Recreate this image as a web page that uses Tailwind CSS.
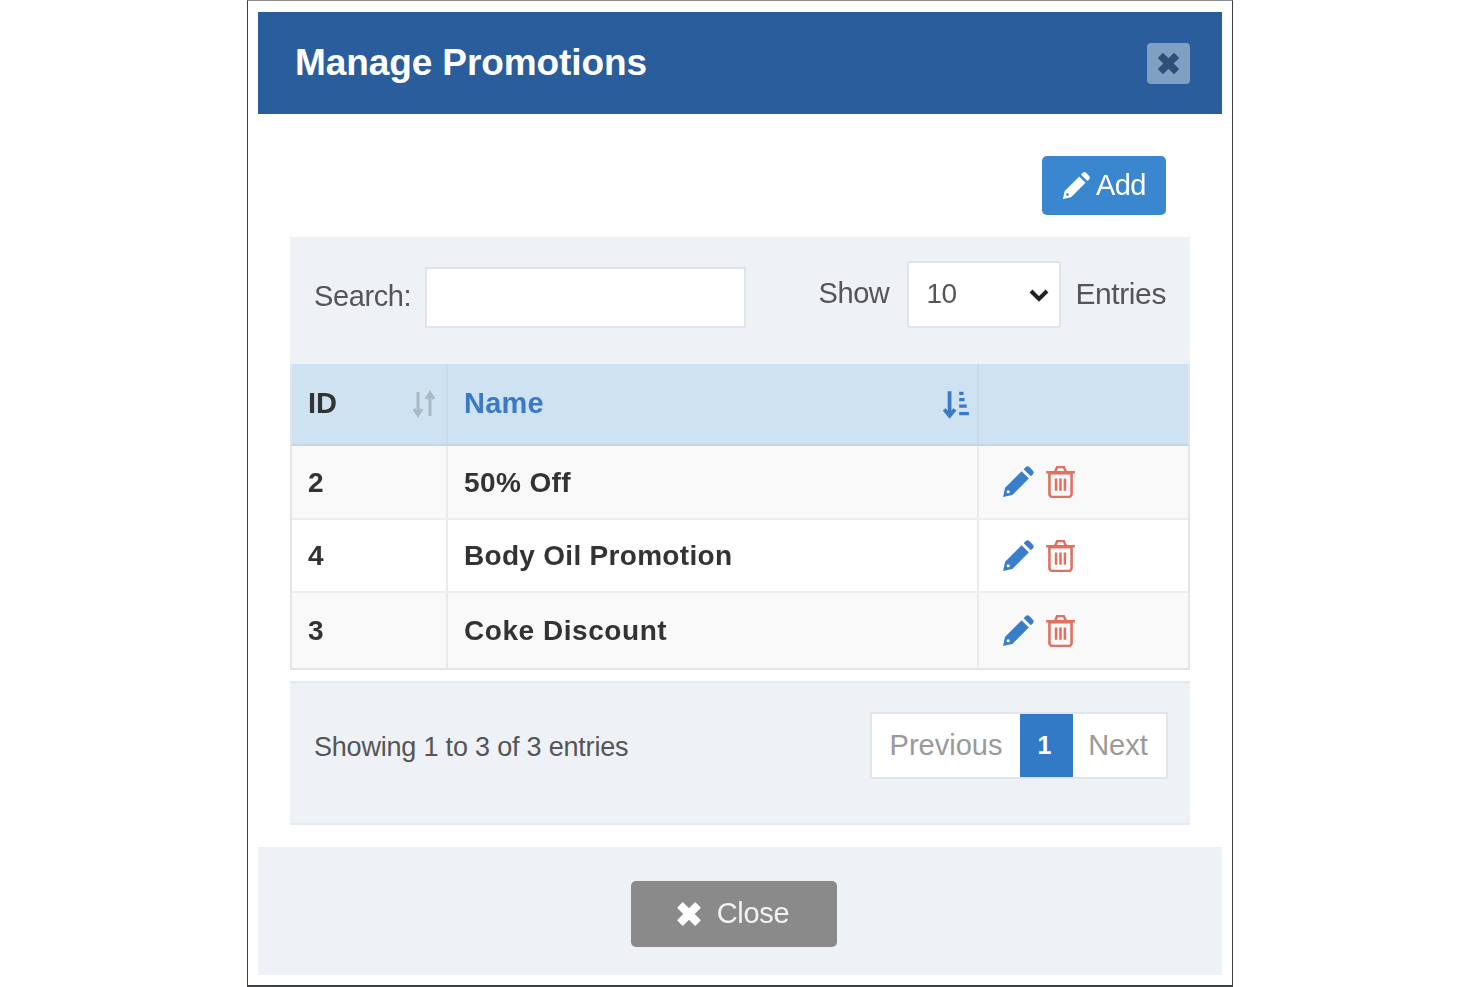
<!doctype html>
<html><head><script src="https://cdn.jsdelivr.net/npm/@tailwindcss/browser@4"></script></head>
<body class="bg-white font-['Liberation_Sans',Arial,sans-serif]">
<div class="w-[1480px] h-[987px] flex justify-center overflow-hidden blur-[0.6px]">
<div class="w-[986px] h-[987px] border border-[#3d4045] border-t-[#8a8d92] border-b-2 px-[10px] pt-[11px] flex flex-col">
  <div class="h-[102px] shrink-0 bg-[#2a5d9c] flex items-center justify-between pl-[37px] pr-[32px]">
    <h1 class="text-[37px] font-bold text-white tracking-[-0.1px]">Manage Promotions</h1>
    <div class="w-[43px] h-[41px] bg-[#7f9fc3] rounded-[4px] flex items-center justify-center">
      <svg viewBox="3 3 18 18" class="w-[25px] h-[25px]"><path d="M5 8l3-3 4 4 4-4 3 3-4 4 4 4-3 3-4-4-4 4-3-3 4-4z" fill="#2f4f78" stroke="#2f4f78" stroke-width="1" stroke-linejoin="round"/></svg>
    </div>
  </div>
  <div class="flex-1 px-[32px] flex flex-col">
    <div class="flex justify-end pr-[24px] pt-[42px] h-[123px] shrink-0">
      <button class="w-[124px] h-[59px] bg-[#3a87d0] rounded-[5px] text-white text-[29px] flex items-center justify-center gap-[5px] tracking-[-0.6px]">
        <svg viewBox="0 0 32 32" class="w-[29px] h-[31px]"><path d="M1 31l2-9L19 6l7 7-16 16z" fill="#fff"/><path d="M21 4l2-2a2.500 2.500 0 0 1 3.500 0l3.500 3.500a2.500 2.500 0 0 1 0 3.500l-2 2z" fill="#fff"/><circle cx="6" cy="26" r="1.500" fill="#3a87d0"/></svg>Add
      </button>
    </div>
    <div class="h-[127px] shrink-0 bg-[#eef2f7] flex items-center pl-[24px] pr-[24px] text-[#555] text-[30px] tracking-[-0.4px]">
      <span class="mr-[14px] mt-[-8px] text-[29px]">Search:</span>
      <div class="w-[321px] h-[61px] bg-white border-2 border-[#e0e3e8] mt-[-7px]"></div>
      <span class="ml-auto mt-[-14px] text-[29px]">Show</span>
      <div class="w-[154px] h-[67px] bg-white border-2 border-[#e0e3e8] rounded-[3px] ml-[18px] mr-[14px] mt-[-13px] flex items-center justify-between pl-[17px] pr-[8px] text-[28px]">
        <span>10</span>
        <svg viewBox="0 0 24 24" class="w-[24px] h-[24px]"><path d="M4 9l8 8 8-8" fill="none" stroke="#222" stroke-width="4"/></svg>
      </div>
      <span class="mt-[-14px]">Entries</span>
    </div>
    <div class="border-2 border-t-0 border-[#e2e5e9] shrink-0">
      <div class="grid grid-cols-[156px_531px_1fr] h-[82px] bg-[#cfe2f1] border-b-2 border-[#c3d6e6] text-[29px]">
        <div class="flex items-center justify-between pl-[16px] pr-[9px] border-r-2 border-[#c9dbe9] font-bold text-[#333]"><span>ID</span>
          <svg viewBox="0 0 26 28" class="w-[26px] h-[28px]"><path d="M7 2v22M3 19l4 6 4-6M19 26V4M15 9l4-6 4 6" fill="none" stroke="#a8b8c5" stroke-width="3"/></svg></div>
        <div class="flex items-center justify-between pl-[16px] pr-[7px] border-r-2 border-[#c9dbe9] font-bold text-[#3a79c6]"><span class="tracking-[0.2px]">Name</span>
          <svg viewBox="0 0 26 28" class="w-[28px] h-[30px]"><path d="M7 2v22M2 19l5 6 5-6" fill="none" stroke="#3a79c6" stroke-width="3.500"/><path d="M16 4h4M16 10h5M16 16h7M16 23h9" fill="none" stroke="#3a79c6" stroke-width="3"/></svg></div>
        <div></div>
      </div>
      <div class="grid grid-cols-[156px_531px_1fr] h-[74px] bg-[#f9f9f9] border-b-2 border-[#eceef0] text-[28px] font-bold text-[#333] items-stretch">
        <div class="flex items-center pl-[16px] pt-[2px] border-r-2 border-[#e8eaec]">2</div>
        <div class="flex items-center pl-[16px] pt-[2px] border-r-2 border-[#e8eaec] tracking-[0.4px]">50% Off</div>
        <div class="flex items-center pl-[23px] gap-[10px] pb-[2px]">
          <svg viewBox="0 0 32 32" class="w-[33px] h-[33px]"><path d="M1 31l2-9L19 6l7 7-16 16z" fill="#3a7dc8"/><path d="M21 4l2-2a2.500 2.500 0 0 1 3.500 0l3.500 3.500a2.500 2.500 0 0 1 0 3.500l-2 2z" fill="#3a7dc8"/><circle cx="6" cy="26" r="1.500" fill="#fff"/></svg>
          <svg viewBox="0 0 28 32" preserveAspectRatio="none" class="w-[31px] h-[33px]"><path d="M4 8h20v20a3 3 0 0 1-3 3H7a3 3 0 0 1-3-3zM1 7h26M9 7l2-5h6l2 5M10 13v12M14 13v12M18 13v12" fill="none" stroke="#e0705f" stroke-width="2.300"/></svg>
        </div>
      </div>
      <div class="grid grid-cols-[156px_531px_1fr] h-[73px] bg-white border-b-2 border-[#eceef0] text-[28px] font-bold text-[#333] items-stretch">
        <div class="flex items-center pl-[16px] pt-[1px] border-r-2 border-[#e8eaec]">4</div>
        <div class="flex items-center pl-[16px] pt-[1px] border-r-2 border-[#e8eaec] tracking-[0.3px]">Body Oil Promotion</div>
        <div class="flex items-center pl-[23px] gap-[10px]">
          <svg viewBox="0 0 32 32" class="w-[33px] h-[33px]"><path d="M1 31l2-9L19 6l7 7-16 16z" fill="#3a7dc8"/><path d="M21 4l2-2a2.500 2.500 0 0 1 3.500 0l3.500 3.500a2.500 2.500 0 0 1 0 3.500l-2 2z" fill="#3a7dc8"/><circle cx="6" cy="26" r="1.500" fill="#fff"/></svg>
          <svg viewBox="0 0 28 32" preserveAspectRatio="none" class="w-[31px] h-[33px]"><path d="M4 8h20v20a3 3 0 0 1-3 3H7a3 3 0 0 1-3-3zM1 7h26M9 7l2-5h6l2 5M10 13v12M14 13v12M18 13v12" fill="none" stroke="#e0705f" stroke-width="2.300"/></svg>
        </div>
      </div>
      <div class="grid grid-cols-[156px_531px_1fr] h-[75px] bg-[#f9f9f9] text-[28px] font-bold text-[#333] items-stretch">
        <div class="flex items-center pl-[16px] pt-[1px] border-r-2 border-[#e8eaec]">3</div>
        <div class="flex items-center pl-[16px] pt-[1px] border-r-2 border-[#e8eaec] tracking-[0.55px]">Coke Discount</div>
        <div class="flex items-center pl-[23px] gap-[10px]">
          <svg viewBox="0 0 32 32" class="w-[33px] h-[33px]"><path d="M1 31l2-9L19 6l7 7-16 16z" fill="#3a7dc8"/><path d="M21 4l2-2a2.500 2.500 0 0 1 3.500 0l3.500 3.500a2.500 2.500 0 0 1 0 3.500l-2 2z" fill="#3a7dc8"/><circle cx="6" cy="26" r="1.500" fill="#fff"/></svg>
          <svg viewBox="0 0 28 32" preserveAspectRatio="none" class="w-[31px] h-[33px]"><path d="M4 8h20v20a3 3 0 0 1-3 3H7a3 3 0 0 1-3-3zM1 7h26M9 7l2-5h6l2 5M10 13v12M14 13v12M18 13v12" fill="none" stroke="#e0705f" stroke-width="2.300"/></svg>
        </div>
      </div>
    </div>
    <div class="mt-[11px] h-[144px] shrink-0 bg-[#eef2f7] border-y-2 border-[#e6e9ee] flex items-start pl-[24px] pr-[22px] pt-[29px]">
      <span class="text-[27px] text-[#555] mt-[15px] tracking-[-0.2px]">Showing 1 to 3 of 3 entries</span>
      <div class="ml-auto flex h-[67px] border-2 border-[#e2e5e9] text-[29px] bg-white">
        <div class="w-[148px] flex items-center justify-center text-[#9a9a9a]">Previous</div>
        <div class="w-[53px] bg-[#337ac6] text-white flex items-center justify-center text-[25px] font-bold pr-[4px]">1</div>
        <div class="w-[93px] flex items-center justify-center text-[#9a9a9a] pr-[3px]">Next</div>
      </div>
    </div>
  </div>
  <div class="mt-[22px] h-[128px] shrink-0 bg-[#eef2f7] flex justify-center items-center mb-[10px]">
    <button class="w-[206px] h-[66px] mt-[6px] bg-[#8a8a8a] rounded-[5px] text-[#f2f2f2] text-[29px] flex items-center justify-center gap-[14px] mr-[12px] pr-[4px] tracking-[-0.3px]">
      <svg viewBox="3 3 18 18" class="w-[28px] h-[28px]"><path d="M5 8l3-3 4 4 4-4 3 3-4 4 4 4-3 3-4-4-4 4-3-3 4-4z" fill="#fff" stroke="#fff" stroke-linejoin="round"/></svg>Close
    </button>
  </div>
</div>
</div>
</body></html>
